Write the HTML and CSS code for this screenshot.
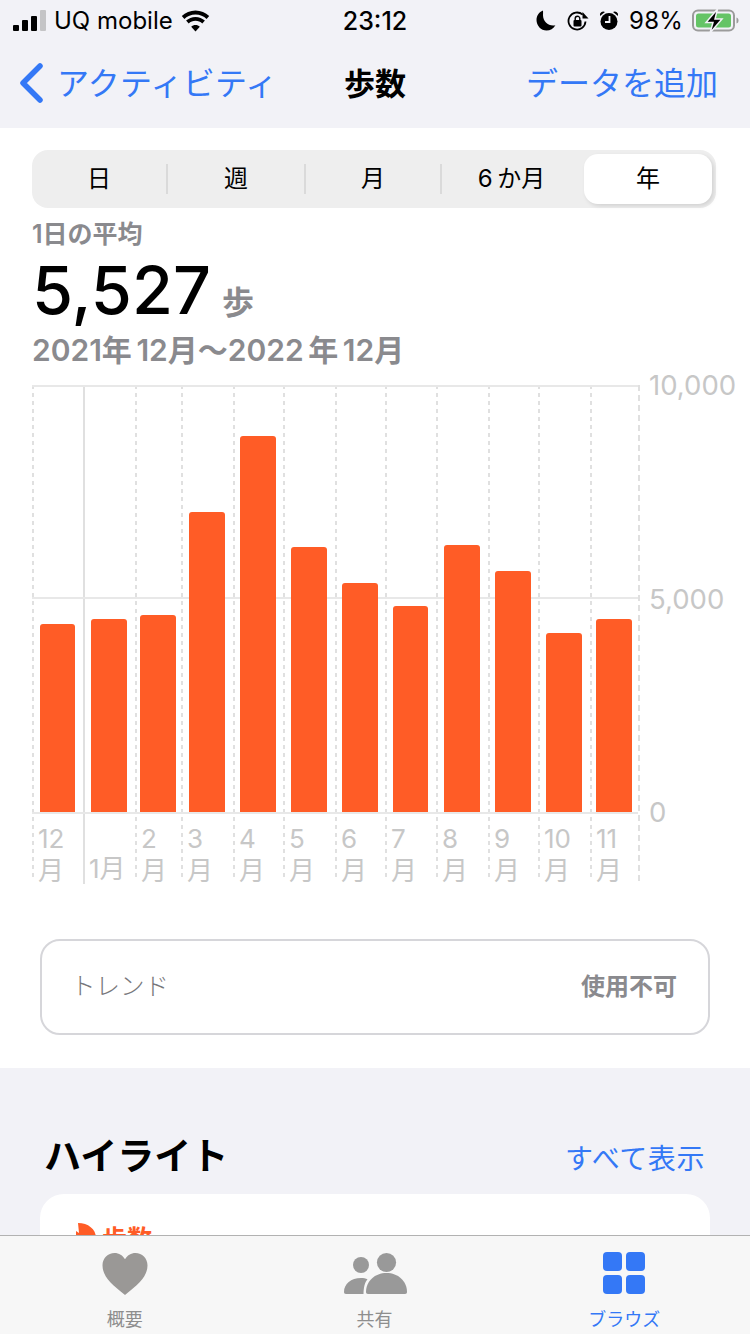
FILE: index.html
```html
<!DOCTYPE html>
<html lang="ja">
<head>
    <meta charset="UTF-8">
    <meta name="viewport" content="width=device-width, initial-scale=1.0">
    <title>歩数</title>
    <link rel="stylesheet" href="styles.css">
</head>
<body>
<div class="screen">
    <header class="top">
        <div class="status">
            <div class="status-left">
                <span class="signal"><i class="s1"></i><i class="s2"></i><i class="s3"></i><i class="s4"></i></span>
                <span class="carrier">UQ mobile</span>
                <svg class="wifi" width="31" height="22" viewBox="0 0 31 22"><path d="M15.500 4.500c4.300 0 8.200 1.700 11.100 4.400l2.600-2.900C25.600 2.600 20.800.5 15.500.5S5.400 2.600 1.800 6l2.600 2.900c2.900-2.700 6.800-4.400 11.100-4.400z"/><path d="M15.500 10.800c2.600 0 5 1 6.800 2.700l2.600-2.900c-2.500-2.300-5.800-3.700-9.400-3.700s-6.900 1.400-9.400 3.700l2.600 2.900c1.800-1.700 4.200-2.700 6.800-2.700z"/><path d="M15.500 21.500l4.300-4.700c-1.100-1-2.600-1.700-4.300-1.700s-3.200.7-4.300 1.700z"/></svg>
            </div>
            <div class="clock">23:12</div>
            <div class="status-right">
                <svg class="moon" width="20" height="21" viewBox="0 0 20 21"><path d="M7 .5C3 2 .5 5.800.5 10c0 5.800 4.500 10.500 10 10.500 3.700 0 7-2 8.900-5.300-.8.2-1.500.3-2.300.3C11.500 15.500 7 11 7 5.200c0-1.700.2-3.200 0-4.700z"/></svg>
                <svg class="lock" width="22" height="22" viewBox="0 0 22 22"><path d="M18.500 11.500a8.500 8.500 0 1 1-2.800-6.800" fill="none" stroke="#000" stroke-width="1.800"/><path d="M15.500 2l6 6.500h-6z"/><rect x="6.500" y="10" width="8" height="6.500" rx="1"/><path d="M8.200 10V8.500a2.300 2.300 0 0 1 4.600 0V10" fill="none" stroke="#000" stroke-width="1.400"/></svg>
                <svg class="alarm" width="20" height="21" viewBox="0 0 20 21"><circle cx="10" cy="11.500" r="8.500"/><path d="M1 6a3.500 3.500 0 0 1 5-4zM19 6a3.500 3.500 0 0 0-5-4z"/><path d="M10.500 6v6H6" fill="none" stroke="#f2f2f7" stroke-width="1.800"/></svg>
                <span class="percent">98%</span>
                <svg class="battery" width="48" height="24" viewBox="0 0 48 24"><rect x="1" y="1.500" width="41" height="20" rx="5" fill="none" stroke="#9b9b9b" stroke-width="2"/><rect x="4" y="4.500" width="35" height="14" rx="2.500" fill="#65c466"/><path d="M44.500 8.500c1.500.5 2 1.500 2 3s-.5 2.500-2 3z" fill="#9b9b9b"/><path d="M25.500 0L14 13.500h7L18 24l12-14h-7z" stroke="#f2f2f7" stroke-width="1.500"/></svg>
            </div>
        </div>
        <nav class="navbar">
            <a class="back">
                <svg width="26" height="40" viewBox="0 0 26 40"><path d="M22 3L5 20l17 17" fill="none" stroke="#3478f6" stroke-width="5.500" stroke-linecap="round" stroke-linejoin="round"/></svg>
                <span>アクティビティ</span>
            </a>
            <div class="nav-title">歩数</div>
            <a class="nav-add">データを追加</a>
        </nav>
    </header>

    <main class="panel">
        <div class="segments">
            <div class="seg seg-day">日</div>
            <div class="seg seg-week">週</div>
            <div class="seg seg-month">月</div>
            <div class="seg seg-half">6 か月</div>
            <div class="seg-on">年</div>
        </div>

        <div class="summary">
            <div class="sum-label">1日の平均</div>
            <div class="sum-value">5,527<span class="sum-unit">歩</span></div>
            <div class="sum-range">2021年 12月〜2022 年 12月</div>
        </div>

        <div class="chart">
            <div class="plot">
                <div class="col w51"><div class="area"><div class="bar" style="height:188px"></div></div><div class="label">12<br>月</div></div>
                <div class="col w52 solid"><div class="area"><div class="bar" style="height:193px"></div></div><div class="label low">1月</div></div>
                <div class="col w46"><div class="area"><div class="bar" style="height:197px"></div></div><div class="label">2<br>月</div></div>
                <div class="col w52"><div class="area"><div class="bar" style="height:300px"></div></div><div class="label">3<br>月</div></div>
                <div class="col w50"><div class="area"><div class="bar" style="height:376px"></div></div><div class="label">4<br>月</div></div>
                <div class="col w52"><div class="area"><div class="bar" style="height:265px"></div></div><div class="label">5<br>月</div></div>
                <div class="col w50"><div class="area"><div class="bar" style="height:229px"></div></div><div class="label">6<br>月</div></div>
                <div class="col w51"><div class="area"><div class="bar" style="height:206px"></div></div><div class="label">7<br>月</div></div>
                <div class="col w52"><div class="area"><div class="bar" style="height:267px"></div></div><div class="label">8<br>月</div></div>
                <div class="col w50"><div class="area"><div class="bar" style="height:241px"></div></div><div class="label">9<br>月</div></div>
                <div class="col w52"><div class="area"><div class="bar" style="height:179px"></div></div><div class="label">10<br>月</div></div>
                <div class="col w50 last"><div class="area"><div class="bar" style="height:193px"></div></div><div class="label">11<br>月</div></div>
            </div>
            <div class="axis">
                <span>10,000</span>
                <span>5,000</span>
                <span>0</span>
            </div>
        </div>

        <div class="trend">
            <span class="trend-name">トレンド</span>
            <span class="trend-val">使用不可</span>
        </div>
    </main>

    <section class="highlights">
        <div class="hl-head">
            <h2>ハイライト</h2>
            <a>すべて表示</a>
        </div>
        <div class="hl-card">
            <div class="hl-title">
                <svg width="20" height="26" viewBox="0 0 20 26"><path d="M2 0c10 0 18 6 18 15v11H0V8l3 2z" fill="#ff5c26"/></svg>
                <span>歩数</span>
            </div>
        </div>
    </section>

    <footer class="tabbar">
        <div class="tab">
            <svg width="46" height="44" viewBox="0 0 46 44"><path d="M23 43C9 32 .5 24 .5 13.500.5 6 6 1 12.500 1c4.500 0 8.300 2.300 10.500 6.300C25.200 3.300 29 1 33.500 1 40 1 45.500 6 45.500 13.500 45.500 24 37 32 23 43z" fill="#9a9896"/></svg>
            <span>概要</span>
        </div>
        <div class="tab">
            <svg width="64" height="44" viewBox="0 0 64 44"><circle cx="18" cy="13" r="8" fill="#999"/><path d="M1 40c0-8 7-14 17-14 2.500 0 4.700.4 6.500 1.200C22 30 20.600 35 20.500 42H3c-1.400 0-2-.8-2-2z" fill="#999"/><circle cx="43.500" cy="10.500" r="9.600" fill="#999"/><path d="M23 40c0-11 9-19 20.500-19S64 29 64 40c0 1.300-.7 2-2 2H25c-1.300 0-2-.7-2-2z" fill="#999"/></svg>
            <span>共有</span>
        </div>
        <div class="tab tab-on">
            <div class="tile-grid"><i></i><i></i><i></i><i></i></div>
            <span>ブラウズ</span>
        </div>
    </footer>
</div>
</body>
</html>
```

FILE: styles.css
```css
* {
    box-sizing: border-box;
}
html, body {
    margin: 0;
    padding: 0;
}
body {
    font-family: Inter, "Noto Sans CJK JP", sans-serif;
    color: #000;
}
.screen {
    position: relative;
    width: 750px;
    height: 1334px;
    overflow: hidden;
    background: #f2f2f7;
}

/* status bar + nav */
.top {
    height: 128px;
    background: #f2f2f7;
}
.status {
    height: 40px;
    display: grid;
    grid-template-columns: 1fr auto 1fr;
    align-items: center;
    padding: 1px 13px 0 13px;
}
.status-left, .status-right {
    display: flex;
    align-items: center;
}
.status-right {
    justify-content: flex-end;
}
.signal {
    display: flex;
    align-items: flex-end;
    gap: 3px;
    height: 21px;
    margin-right: 8px;
}
.signal i {
    width: 6px;
    background: #000;
    border-radius: 1px;
}
.s1 { height: 6px; }
.s2 { height: 11px; }
.s3 { height: 15px; }
.s4 { height: 21px; background: #c4c4c6 !important; }
.carrier {
    font-size: 24px;
    margin-right: 7px;
}
.clock {
    font-size: 25px;
    font-weight: 500;
}
.moon { margin-right: 11px; }
.lock { margin-right: 10px; }
.alarm { margin-right: 10px; }
.percent {
    font-size: 24px;
    letter-spacing: 0.2px;
    margin-right: 9px;
}
.battery {
    margin-right: -3px;
}
.navbar {
    height: 82px;
    display: grid;
    grid-template-columns: 1fr auto 1fr;
    align-items: center;
    padding: 0 32px;
    color: #3478f6;
}
.navbar a {
    font-size: 32px;
}
.back {
    display: flex;
    align-items: center;
    gap: 13px;
    margin-left: -14px;
    letter-spacing: 0.3px;
    white-space: nowrap;
}
.back svg {
    margin-top: 4px;
}
.nav-add {
    text-align: right;
    white-space: nowrap;
}
.nav-title {
    color: #000;
    font-size: 31px;
    font-weight: 700;
}

/* white part */
.panel {
    height: 940px;
    background: #fff;
    padding: 22px 34px 0 32px;
}
.segments {
    display: flex;
    align-items: center;
    height: 58px;
    background: #eee;
    border-radius: 16px;
}
.seg {
    height: 30px;
    line-height: 30px;
    text-align: center;
    font-size: 24px;
    border-right: 2px solid #dadada;
}
.seg-day { width: 136px; }
.seg-week { width: 138px; }
.seg-month { width: 136px; }
.seg-half { width: 139px; border-right: none; word-spacing: -2px; }
.seg-on {
    width: 128px;
    height: 50px;
    line-height: 50px;
    margin-left: 3px;
    text-align: center;
    font-size: 24px;
    background: #fff;
    border-radius: 14px;
    box-shadow: 2px 2px 4px rgba(0, 0, 0, 0.12);
}
.summary {
    color: #8a8a8e;
}
.sum-label {
    font-size: 25px;
    font-weight: 600;
    line-height: 30px;
    margin-top: 11px;
}
.sum-value {
    color: #000;
    font-size: 66.5px;
    line-height: 83px;
    font-weight: 500;
}
.sum-unit {
    color: #8a8a8e;
    font-size: 32px;
    line-height: 1;
    font-weight: 600;
    margin-left: 11px;
}
.sum-range {
    font-size: 30px;
    font-weight: 600;
    line-height: 36px;
    font-feature-settings: "palt";
    word-spacing: -3px;
}

/* chart */
.chart {
    display: flex;
    margin-top: 17px;
    margin-bottom: 55px;
}
.plot {
    display: flex;
    width: 608px;
}
.col {
    background: repeating-linear-gradient(to bottom, #e0e0e0 0, #e0e0e0 4px, transparent 4px, transparent 8px) left top / 2px 100% no-repeat;
    height: 496px;
}
.col.solid {
    background: linear-gradient(#e0e0e0, #e0e0e0) left top / 2px 100% no-repeat;
    height: 499px;
}
.col.last {
    border-right: 2px dashed #e0e0e0;
}
.w46 { width: 46px; }
.w50 { width: 50px; }
.w51 { width: 51px; }
.w52 { width: 52px; }
.area {
    height: 429px;
    display: flex;
    align-items: flex-end;
    justify-content: center;
    border-top: 2px solid #e8e8e8;
    border-bottom: 2px solid #e8e8e8;
    background: linear-gradient(#e8e8e8, #e8e8e8) left 210px / 100% 2px no-repeat;
}
.bar {
    width: 35.5px;
    background: #ff5c26;
    border-radius: 3px 3px 0 0;
}
.label {
    padding: 9px 0 0 6px;
    color: #c7c7c7;
    font-size: 26px;
    line-height: 32px;
}
.label.low {
    padding-top: 39px;
}
.axis {
    flex: 1;
    height: 457px;
    display: flex;
    flex-direction: column;
    justify-content: space-between;
    color: #c7c7c7;
    font-size: 27.5px;
    line-height: 30px;
    padding-left: 9px;
    margin-top: -15px;
    margin-right: -20px;
}

/* trend */
.trend {
    margin: 0 6px 0 8px;
    height: 96px;
    border: 2px solid #d6d6da;
    border-radius: 20px;
    display: flex;
    align-items: center;
    justify-content: space-between;
    padding: 0 31px 5px 29px;
    font-size: 24px;
    color: #8a8a8e;
}
.trend-name {
    font-size: 24.5px;
    font-weight: 300;
    color: #77777b;
}
.trend-val {
    font-weight: 700;
}

/* highlights */
.highlights {
    padding: 0 40px;
}
.hl-head {
    display: flex;
    justify-content: space-between;
    align-items: center;
    height: 126px;
    padding: 52px 5px 0 4px;
}
.hl-head h2 {
    margin: -6px 0 0 0;
    font-size: 37px;
    font-weight: 700;
}
.hl-head a {
    color: #3478f6;
    font-size: 28px;
    letter-spacing: 0.6px;
}
.hl-card {
    height: 200px;
    background: #fff;
    border-radius: 24px;
    padding: 29px 36px;
}
.hl-title {
    display: flex;
    align-items: flex-start;
    gap: 6px;
    color: #ff5c26;
    font-size: 25px;
    line-height: 32px;
    font-weight: 700;
}

/* tab bar lies over the scrolled content */
.tabbar {
    position: absolute;
    left: 0;
    right: 0;
    bottom: 0;
    height: 99px;
    display: flex;
    background: #f7f7f7;
    border-top: 1px solid #b2b2b2;
}
.tab {
    flex: 1;
    display: flex;
    flex-direction: column;
    align-items: center;
    height: 98px;
    padding-top: 16px;
    color: #8e8e8e;
    font-size: 18px;
}
.tab span {
    margin-top: 12px;
    line-height: 24px;
}
.tab svg {
    display: block;
}
.tab-on {
    color: #3478f6;
    padding-right: 1px;
}
.tile-grid {
    display: grid;
    grid-template-columns: 19px 19px;
    gap: 4px;
    margin-bottom: 2px;
}
.tile-grid i {
    height: 19px;
    background: #3478f6;
    border-radius: 4px;
}
```
